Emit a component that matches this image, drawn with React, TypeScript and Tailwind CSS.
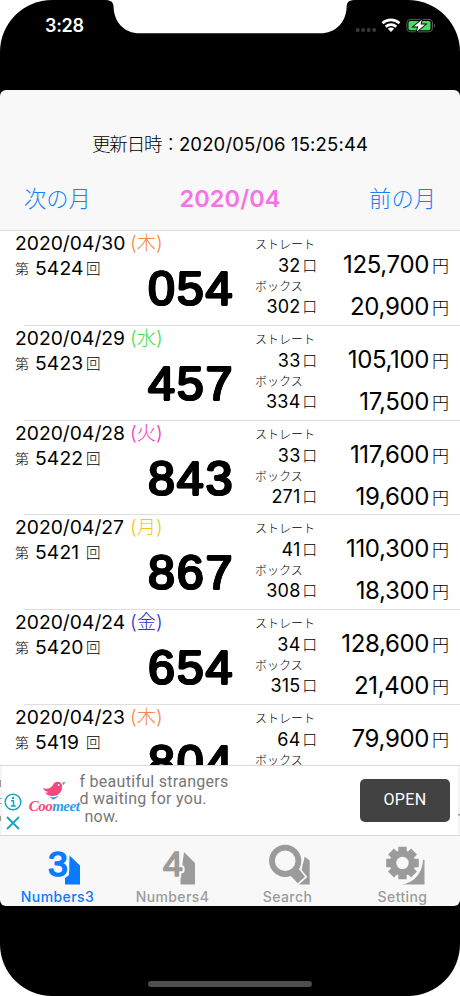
import type { ReactNode } from "react"

interface Draw {
  date: string
  day: string
  dayColor: string
  round: string
  num: string
  straight: string
  straightYen: string
  box: string
  boxYen: string
}

const draws: Draw[] = [
  { date: "2020/04/30", day: "木", dayColor: "text-[#f58a43]", round: "5424", num: "054", straight: "32", straightYen: "125,700", box: "302", boxYen: "20,900" },
  { date: "2020/04/29", day: "水", dayColor: "text-[#3fe24a]", round: "5423", num: "457", straight: "33", straightYen: "105,100", box: "334", boxYen: "17,500" },
  { date: "2020/04/28", day: "火", dayColor: "text-[#f032c8]", round: "5422", num: "843", straight: "33", straightYen: "117,600", box: "271", boxYen: "19,600" },
  { date: "2020/04/27", day: "月", dayColor: "text-[#f5c518]", round: "5421", num: "867", straight: "41", straightYen: "110,300", box: "308", boxYen: "18,300" },
  { date: "2020/04/24", day: "金", dayColor: "text-[#3030d0]", round: "5420", num: "654", straight: "34", straightYen: "128,600", box: "315", boxYen: "21,400" },
  { date: "2020/04/23", day: "木", dayColor: "text-[#f58a43]", round: "5419", num: "804", straight: "64", straightYen: "79,900", box: "310", boxYen: "18,900" },
]

function StatusBar() {
  return (
    <div className="relative flex h-[90px] items-start justify-between pl-[45px] pr-[24px]">
      <svg className="absolute left-[104px] top-0" width="252" height="34" viewBox="0 0 252 34">
        <path d="M0 0H252C246 0 243 1.500 242.700 6C242.500 22 232 33.300 216 33.300H36C20 33.300 9.800 22 9.500 6C9.200 1.500 6 0 0 0Z" fill="#fff" />
      </svg>
      <span className="mt-[12px] text-[18px] leading-[27px] font-semibold tracking-[-0.3px] text-white">3:28</span>
      <div className="mt-[17px] flex items-center">
        <svg width="80" height="16" viewBox="0 0 80 16">
          <g fill="#3a3a3a">
            <circle cx="1.700" cy="13" r="2" />
            <circle cx="7.200" cy="13" r="2" />
            <circle cx="12.700" cy="13" r="2" />
            <circle cx="18.200" cy="13" r="2" />
          </g>
          <g fill="none" stroke="#fff" strokeWidth="2.600">
            <path d="M26.500 6.200A12.600 12.600 0 0 1 43.500 6.200" />
            <path d="M29.700 9.700A7.800 7.800 0 0 1 40.300 9.700" />
          </g>
          <path d="M35 15L31.900 11.800A4.400 4.400 0 0 1 38.100 11.800Z" fill="#fff" />
          <rect x="50.900" y="2.400" width="25.600" height="12.400" rx="3.500" fill="none" stroke="#5c5c5c" />
          <rect x="52.500" y="4" width="22" height="9.200" rx="1.800" fill="#4cd964" />
          <path d="M78 6.300C79.500 7 79.500 10.200 78 10.900Z" fill="#5c5c5c" />
          <path d="M65.800 2.800L57.800 9.500H62.300L60.800 14.400L69.200 7.500H64.600Z" fill="#fff" stroke="#000" strokeWidth="1.800" paintOrder="stroke" />
        </svg>
      </div>
    </div>
  )
}

function Header() {
  return (
    <div className="flex h-[141px] shrink-0 flex-col border-b border-[#dcdcdc]">
      <div className="mt-[41px] text-center text-[18.500px] leading-[26px] tracking-[0.150px] whitespace-nowrap">
        <span className="font-light tracking-[-1.100px]">更新日時：</span>2020/05/06 15:25:44
      </div>
      <div className="mt-[25px] flex items-center justify-between px-[24px] leading-[34px] text-[#1a82f7]">
        <button className="text-[22.300px] font-light">次の月</button>
        <span className="text-[23.500px] font-semibold tracking-[0.100px] text-[#f772e2]">2020/04</span>
        <button className="text-[22.300px] font-light">前の月</button>
      </div>
    </div>
  )
}

function Count({ value }: { value: string }) {
  return (
    <div className="flex h-[22px] items-baseline justify-end gap-[2px] text-[18px] leading-[22px] tracking-[0.200px]">
      <span>{value}</span>
      <span className="relative -top-px text-[14.500px] font-light tracking-normal">口</span>
    </div>
  )
}

function Yen({ value }: { value: string }) {
  return (
    <div className="flex h-[42px] items-baseline justify-end gap-[3px] text-[24px] leading-[42px] tracking-[-0.350px]">
      <span>{value}</span>
      <span className="relative -top-px text-[17px] font-light tracking-normal">円</span>
    </div>
  )
}

function DrawRow({ draw }: { draw: Draw }) {
  return (
    <div className="h-[94.800px] shrink-0">
      <div className="flex h-[93.800px] overflow-hidden pl-[15px]">
        <div className="w-[240px]">
          <div className="flex h-[25px] text-[19.300px] leading-[25px] whitespace-nowrap">
            <span className="w-[115px]">{draw.date}</span>
            <span className={`${draw.dayColor} font-light`}>({draw.day})</span>
          </div>
          <div className="flex">
            <div className="flex h-[25px] w-[133px] items-baseline text-[19.300px] leading-[25px]">
              <span className="relative -top-px w-[20px] text-[14px] font-light">第</span>
              <span className="w-[51px] tracking-[0.100px]">{draw.round}</span>
              <span className="relative -top-px text-[14.500px] font-light">回</span>
            </div>
            <div className="mt-[2px] h-[60px] font-['Liberation_Sans'] text-[48.500px] leading-[60px] tracking-[1.800px] [text-shadow:1.200px_0_#000,-1.200px_0_#000,0_1.200px_#000,0_-1.200px_#000,.85px_.85px_#000,-.85px_.85px_#000,.85px_-.85px_#000,-.85px_-.85px_#000]">
              {draw.num}
            </div>
          </div>
        </div>
        <div className="w-[62px]">
          <div className="mt-[4px] h-[20px] text-[12px] leading-[20px] font-light whitespace-nowrap">ストレート</div>
          <Count value={draw.straight} />
          <div className="h-[19px] text-[12px] leading-[19px] font-light whitespace-nowrap">ボックス</div>
          <Count value={draw.box} />
        </div>
        <div className="mt-[13px] w-[132px]">
          <Yen value={draw.straightYen} />
          <Yen value={draw.boxYen} />
        </div>
      </div>
      <div className="ml-[24px] h-px bg-[#dedede]" />
    </div>
  )
}

function AdBanner() {
  return (
    <div className="relative h-[71px] shrink-0 border-y border-[#d8d8d8] bg-[#f4f4f4] px-[2px]">
      {/* slivers of the ad text that sits behind the card */}
      <svg className="absolute left-0 top-0" width="2" height="69" viewBox="0 0 2 69">
        <path d="M0 14H1V21H0ZM0 32H1.500V33H0ZM0 37H1.500V38H0ZM0 50H1V55H0Z" fill="#999" />
      </svg>
      <svg className="absolute right-0 top-[48px]" width="2" height="2" viewBox="0 0 2 2">
        <path d="M0 0H2V1.500H0Z" fill="#999" />
      </svg>
      <div className="flex h-full items-start bg-white">
        <div className="mt-[27px] ml-[1.500px] flex w-[18px] flex-col items-center gap-[4px] text-[#16a3c0]">
          <svg width="18" height="18" viewBox="0 0 18 18" fill="none" stroke="currentColor">
            <circle cx="9" cy="9" r="7.800" strokeWidth="1.500" />
            <path d="M7 7.700H9.500V12.800M6.800 12.900H11.800" strokeWidth="1.500" />
            <circle cx="9" cy="4.900" r="1.200" fill="currentColor" stroke="none" />
          </svg>
          <svg width="16" height="16" viewBox="0 0 16 16" fill="none" stroke="currentColor" strokeWidth="1.800">
            <path d="M2 2L14 14M14 2L2 14" />
          </svg>
        </div>
        <div className="ml-[8px] mt-[15px] flex w-[49px] flex-col items-center">
          <svg width="24" height="19" viewBox="0 0 24 19">
            <path d="M1 7C5 9 9 7 11 4C12 0 19 -.500 20 4C21 10 17 15 11 15C7 15 4 13.500 3.500 11.500C5 11.500 6 11.400 6.500 11C3.500 10.500 1.500 9 1 7Z" fill="#f5487f" />
            <path d="M20 1.500L23.500 1L21.500 4Z" fill="#2f9be8" />
            <circle cx="16.700" cy="4" r=".9" fill="#fff" />
            <path d="M7 15.500C10 17 14 16.500 16 14.500C15.500 17 12 18.500 10.500 18.500C10 17.500 8 16.500 7 15.500Z" fill="#2f9be8" />
          </svg>
          <span className="font-['Liberation_Serif'] text-[15px] leading-[13px] font-bold tracking-[-0.500px] text-[#f5487f] italic">
            Coo<span className="text-[#2f9be8]">meet</span>
          </span>
        </div>
        <div className="mt-[7px] ml-[1px] flex-1 font-['Roboto'] text-[16px] leading-[17.300px] tracking-[0.280px] whitespace-pre text-[#777]">
          <div>f beautiful strangers</div>
          <div>d waiting for you.</div>
          <div className="pl-[5px]">now.</div>
        </div>
        <button className="mt-[13px] mr-[8px] h-[43px] w-[90px] rounded-[5px] bg-[#424242] pb-[2px] font-['Roboto'] text-[16px] tracking-[0.400px] text-white">OPEN</button>
      </div>
    </div>
  )
}

// digit sitting on top of a cut-out sheet of paper
function DigitIcon({ digit, paper }: { digit: string; paper: string }) {
  return (
    <svg width="44" height="44" viewBox="0 0 44 44" className="overflow-visible font-['Liberation_Sans'] text-[35.500px]" strokeLinejoin="round">
      <path d={paper} fill="currentColor" />
      <text x="12" y="34" fill="#f8f8f8" stroke="#f8f8f8" strokeWidth="5.500">{digit}</text>
      <text x="12" y="34" fill="currentColor" stroke="currentColor" strokeWidth="1.600">{digit}</text>
    </svg>
  )
}

function SearchIcon() {
  return (
    <svg width="44" height="44" viewBox="0 0 44 44">
      <path d="M38.700 14.700L43.700 18.500V42.500H32Z" fill="currentColor" />
      <path d="M32 26L39 34.700L31.700 41.300L24 33Z" fill="currentColor" stroke="#f8f8f8" strokeWidth="3.400" paintOrder="stroke" />
      <circle cx="19.200" cy="18.800" r="13.200" fill="#f8f8f8" stroke="currentColor" strokeWidth="5.800" />
    </svg>
  )
}

const teeth = [0, 45, 90, 135]

function GearIcon() {
  return (
    <svg width="44" height="44" viewBox="0 0 44 44">
      <path d="M43.500 18V42.500H21C33 41 41.500 31 42 18Z" fill="currentColor" />
      <g fill="currentColor">
        <circle cx="21.500" cy="21" r="12.800" />
        {teeth.map((a) => (
          <path key={a} d="M17.300 4.700H25.700V37.300H17.300Z" transform={`rotate(${a} 21.500 21)`} />
        ))}
      </g>
      <circle cx="21.500" cy="21" r="6.200" fill="#f8f8f8" />
    </svg>
  )
}

function Tab({ label, active, children }: { label: string; active?: boolean; children: ReactNode }) {
  return (
    <button className={`flex flex-1 flex-col items-center pt-[6px] ${active ? "text-[#0a7aff]" : "text-[#9b9b9b]"}`}>
      {children}
      <span className="mt-[1.500px] text-[14px] leading-[17px] font-medium tracking-[0.400px]">{label}</span>
    </button>
  )
}

export default function App() {
  return (
    <div className="h-[996px] w-[460px] overflow-hidden bg-white font-['Inter','Noto_Sans_CJK_JP',sans-serif] text-black">
      <div className="flex h-full flex-col overflow-hidden rounded-[52px] bg-black">
        <StatusBar />
        <div className="flex h-[816px] flex-col overflow-hidden rounded-[6px] bg-[#f8f8f8]">
          <Header />
          <div className="flex min-h-0 flex-1 flex-col overflow-hidden bg-white">
            {draws.map((d) => (
              <DrawRow key={d.date} draw={d} />
            ))}
          </div>
          <AdBanner />
          <div className="flex h-[70px] shrink-0">
            <Tab label="Numbers3" active>
              <DigitIcon digit="3" paper="M33.500 13.500L44 23.500V42.500H29V36L33 33Z" />
            </Tab>
            <Tab label="Numbers4">
              <DigitIcon digit="4" paper="M33 10L44 21V42.500H29.500V37Z" />
            </Tab>
            <Tab label="Search">
              <SearchIcon />
            </Tab>
            <Tab label="Setting">
              <GearIcon />
            </Tab>
          </div>
        </div>
        <div className="mx-auto mt-[75px] h-[6px] w-[164px] rounded-full bg-[#4d4d4d]" />
      </div>
    </div>
  )
}
